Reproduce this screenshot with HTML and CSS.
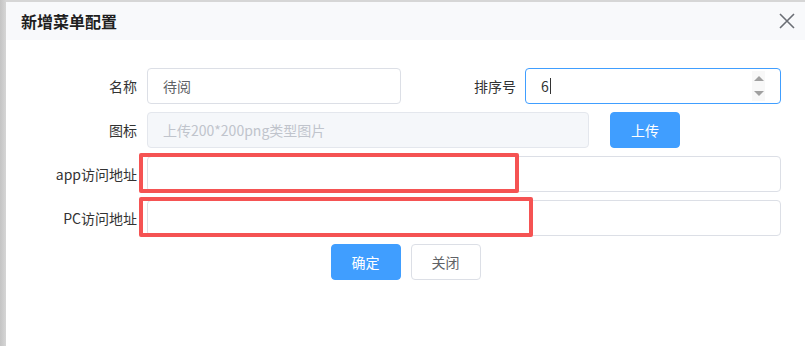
FILE: index.html
```html
<!DOCTYPE html>
<html lang="zh-CN">
<head>
    <meta charset="UTF-8">
    <meta name="viewport" content="width=device-width, initial-scale=1.0">
    <title>新增菜单配置</title>
    <link rel="stylesheet" href="styles.css">
</head>
<body>

    <div class="dialog">
        <!-- Header -->
        <div class="dialog-header">
            <span class="dialog-title">新增菜单配置</span>
            <svg class="dialog-close" width="16" height="16" viewBox="0 0 16 16">
                <path d="M1 1 L15 15 M15 1 L1 15" stroke="#6b6e75" stroke-width="1.6" fill="none"/>
            </svg>
        </div>

        <!-- Form -->
        <div class="form">
            <div class="row row-split">
                <label class="label">名称</label>
                <input class="input" type="text" value="待阅">
                <label class="label label-wide">排序号</label>
                <div class="input input-focus">
                    <span class="value">6</span><span class="caret"></span>
                    <span class="spin">
                        <span class="arrow-up"></span>
                        <span class="arrow-down"></span>
                    </span>
                </div>
            </div>

            <div class="row row-upload">
                <label class="label">图标</label>
                <input class="input" type="text" placeholder="上传200*200png类型图片" disabled>
                <button class="btn btn-primary btn-upload">上传</button>
            </div>

            <div class="row">
                <label class="label">app访问地址</label>
                <div class="field">
                    <input class="input" type="text">
                    <span class="mark mark-app"></span>
                </div>
            </div>

            <div class="row">
                <label class="label">PC访问地址</label>
                <div class="field">
                    <input class="input" type="text">
                    <span class="mark mark-pc"></span>
                </div>
            </div>

            <div class="actions">
                <button class="btn btn-primary">确定</button>
                <button class="btn">关闭</button>
            </div>
        </div>
    </div>

</body>
</html>
```

FILE: styles.css
```css
html, body { margin: 0; height: 100%; }
body { background: linear-gradient(to right, #c4c4c4, #d6d6d6 6px); font-family: "Noto Sans CJK SC", "Noto Sans", sans-serif; font-size: 14px; color: #333; overflow: hidden; }

.dialog { margin: 2px 0 0 6px; height: 344px; background: #fff; }
.dialog-header { height: 38px; padding: 0 10px 0 15px; background: #f8f9fb; display: flex; align-items: center; justify-content: space-between; }
.dialog-title { font-size: 16px; font-weight: bold; color: #1f1f1f; }

.form { padding: 28px 0 0 41px; }
.row { display: grid; grid-template-columns: 100px 634px; height: 36px; margin-bottom: 8px; }
.row-split { grid-template-columns: 100px 254px 124px 256px; }
.row-upload { grid-template-columns: 100px 442px 91px; }
.btn-upload { margin-left: 21px; }

.label { display: flex; align-items: center; justify-content: flex-end; padding-right: 10px; color: #333; }
.label-wide { padding-right: 9px; }

.input { box-sizing: border-box; width: 100%; height: 36px; padding: 0 15px; border: 1px solid #dcdfe6; border-radius: 4px; background: #fff; font-family: inherit; font-size: 14px; color: #606266; outline: none; }
.input:disabled { background: #f5f7fa; border-color: #e4e7ed; }
.input::placeholder { color: #c0c4cc; }
.input-focus { position: relative; display: flex; align-items: center; border-color: #409eff; color: #333; }
.caret { display: inline-block; width: 1px; height: 16px; margin-left: 1px; background: #333; }

.spin { position: absolute; right: 15px; top: 2px; bottom: 2px; width: 13px; background: #f8f8f8; display: flex; flex-direction: column; justify-content: space-around; align-items: center; }
.arrow-up { width: 0; height: 0; border: 5px solid transparent; border-top: 0; border-bottom: 5px solid #a0a0a0; }
.arrow-down { width: 0; height: 0; border: 5px solid transparent; border-bottom: 0; border-top: 5px solid #a0a0a0; }

.field { position: relative; }
.mark { position: absolute; left: -8px; top: -3px; height: 40px; box-sizing: border-box; border: 4px solid #f55353; border-radius: 2px; pointer-events: none; }
.mark-app { width: 380px; }
.mark-pc { width: 394px; }

.btn { width: 70px; height: 36px; border: 1px solid #dcdfe6; border-radius: 4px; background: #fff; color: #606266; font-family: inherit; font-size: 14px; cursor: pointer; }
.btn-primary { background: #409eff; border-color: #409eff; color: #fff; }

.actions { display: flex; justify-content: center; gap: 10px; margin-left: -41px; }
```
